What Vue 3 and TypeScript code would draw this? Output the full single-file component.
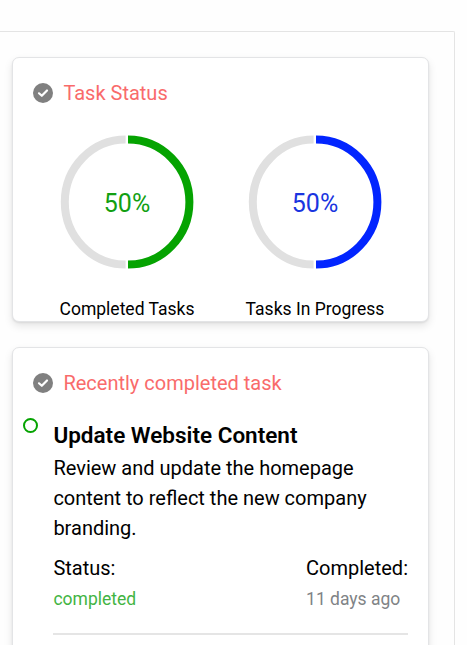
<script setup lang="ts">
interface Stat {
  label: string
  percent: number
  tone: string
}

interface Task {
  title: string
  description: string
  status: string
  completed: string
}

const stats: Stat[] = [
  { label: 'Completed Tasks', percent: 50, tone: 'green' },
  { label: 'Tasks In Progress', percent: 50, tone: 'blue' },
]

const tasks: Task[] = [
  {
    title: 'Update Website Content',
    description: 'Review and update the homepage content to reflect the new company branding.',
    status: 'completed',
    completed: '11 days ago',
  },
]
</script>

<template>
  <main class="page">
    <section class="panel">
      <article class="card status-card">
        <header class="card-head">
          <svg class="check" viewBox="0 0 20 20" aria-hidden="true">
            <circle cx="10" cy="10" r="10" />
            <path d="M6 10.3 8.8 12.8 14 7.5" />
          </svg>
          <h2 class="heading">Task Status</h2>
        </header>
        <div class="stats">
          <figure v-for="stat in stats" :key="stat.label" class="stat" :class="stat.tone">
            <svg class="ring" viewBox="0 0 134 134">
              <path class="track" d="M65.6 4.6 A60.8 62.5 0 0 0 65.6 129.6" />
              <path class="value" d="M68 4.6 A61.4 62.5 0 0 1 68 129.6" />
              <text class="percent" x="67" y="77" text-anchor="middle">{{ stat.percent }}%</text>
            </svg>
            <figcaption class="label">{{ stat.label }}</figcaption>
          </figure>
        </div>
      </article>

      <article class="card recent-card">
        <header class="card-head">
          <svg class="check" viewBox="0 0 20 20" aria-hidden="true">
            <circle cx="10" cy="10" r="10" />
            <path d="M6 10.3 8.8 12.8 14 7.5" />
          </svg>
          <h2 class="heading">Recently completed task</h2>
        </header>
        <div v-for="task in tasks" :key="task.title" class="task">
          <span class="dot"></span>
          <div class="task-body">
            <h3 class="title">{{ task.title }}</h3>
            <p class="description">{{ task.description }}</p>
            <div class="meta">
              <div>
                <div class="meta-name">Status:</div>
                <div class="meta-value done">{{ task.status }}</div>
              </div>
              <div>
                <div class="meta-name">Completed:</div>
                <div class="meta-value">{{ task.completed }}</div>
              </div>
            </div>
          </div>
        </div>
      </article>
    </section>
  </main>
</template>

<style>
body {
  background: #fefefe;
  overflow: hidden;
}
</style>

<style scoped>
* {
  box-sizing: border-box;
  margin: 0;
}

.page {
  height: 645px;
  padding-top: 31px;
  overflow: hidden;
  font-family: Roboto, sans-serif;
  font-size: 20px;
  line-height: 30px;
  color: #000;
}

.panel {
  display: flex;
  flex-direction: column;
  gap: 25px;
  width: 455px;
  height: 660px;
  padding: 25px 25px 0 12px;
  border-top: 1px solid #e4e4e4;
  border-right: 1px solid #e4e4e4;
  border-top-right-radius: 2px;
}

.card {
  flex: none;
  width: 417px;
  border: 1px solid #e3e4e6;
  border-radius: 7px;
  background: #fff;
  box-shadow: 0 4px 8px rgba(0, 0, 0, 0.1), 0 1px 2px rgba(0, 0, 0, 0.08);
}

.status-card {
  height: 265px;
}

.recent-card {
  height: 360px;
}

.card-head {
  display: flex;
  align-items: center;
  gap: 10.4px;
  padding: 20px 20px 0;
}

.check {
  width: 20px;
  height: 20px;
}

.check circle {
  fill: #808080;
}

.check path {
  fill: none;
  stroke: #fff;
  stroke-width: 2.2;
  stroke-linecap: round;
  stroke-linejoin: round;
}

.heading {
  font-size: 20px;
  font-weight: 400;
  color: #f96b6b;
}

.stats {
  display: flex;
  padding: 27px 19px 0 20px;
}

.stat {
  flex: 1;
  display: flex;
  flex-direction: column;
  align-items: center;
}

.ring {
  width: 134px;
  height: 134px;
  overflow: visible;
}

.ring path {
  fill: none;
  stroke-width: 8;
}

.track {
  stroke: #e0e0e0;
}

.green .value {
  stroke: #05a301;
}

.blue .value {
  stroke: #0225ff;
}

.percent {
  font-size: 25px;
}

.green .percent {
  fill: #129f12;
}

.blue .percent {
  fill: #1a35e0;
}

.label {
  margin-top: 27px;
  font-size: 17.5px;
  line-height: 27px;
  white-space: nowrap;
}

.task {
  display: flex;
  gap: 15.4px;
  padding: 20px 20px 0 10px;
}

.dot {
  flex: none;
  width: 15px;
  height: 15px;
  border: 2px solid #05a301;
  border-radius: 50%;
}

.task-body {
  flex: 1;
  padding-bottom: 18px;
  border-bottom: 2px solid #e5e5e5;
}

.title {
  padding: 1px 0;
  font-size: 22.5px;
  line-height: 33px;
  font-weight: 600;
}

.meta {
  display: flex;
  justify-content: space-between;
  margin-top: 10px;
}

.meta-value {
  padding-top: 1px;
  font-size: 17.5px;
  line-height: 31px;
  color: #808386;
}

.meta-value.done {
  color: #42b443;
}
</style>
